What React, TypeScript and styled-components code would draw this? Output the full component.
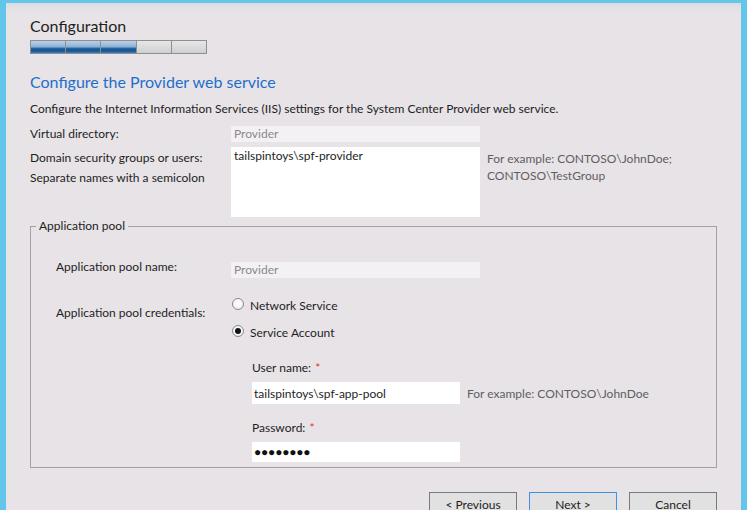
import React from "react";
import styled, { createGlobalStyle } from "styled-components";

const FONT = `"Segoe UI", Lato, "Liberation Sans", sans-serif`;

const GlobalStyle = createGlobalStyle`
  html, body { margin: 0; padding: 0; background: #61C6EA; }
  body { font-family: ${FONT}; font-size: 12px; color: #1e1e1e; }
  *, *::before, *::after { box-sizing: border-box; }
`;

const Frame = styled.div`
  width: 747px;
  height: 510px;
  background: #61C6EA;
  padding: 3px 6px 0 6px;
  overflow: hidden;
`;

const Panel = styled.div`
  height: 100%;
  background: linear-gradient(to bottom, #dedbde 0px, #e3e0e3 4px, #e7e3e7 9px, #e7e3e7 100%);
  padding: 0 24px 0 24px;
  display: flex;
  flex-direction: column;
  overflow: hidden;
  & > * {
    flex-shrink: 0;
  }
`;

const Title = styled.h1`
  margin: 13px 0 0 0;
  font-family: ${FONT};
  font-weight: 400;
  font-size: 16px;
  line-height: 20px;
  color: #1e1e1e;
`;

const Progress = styled.div`
  margin-top: 4px;
  width: 177px;
  height: 14px;
  border: 1px solid #8f8f8f;
  display: flex;
  gap: 1px;
  background: #8f8f8f;
`;

const Segment = styled.div<{ $done: boolean }>`
  flex: 1;
  background: ${(p) =>
    p.$done
      ? "linear-gradient(to bottom, #b9d0e6 0%, #97b8da 40%, #7fa7cf 52%, #2b66a4 58%, #16528f 80%, #3d7db8 100%)"
      : "linear-gradient(to bottom, #e6e6e6 0%, #dcdcdc 50%, #cfcfcf 100%)"};
`;

const Heading = styled.h2`
  margin: 18px 0 0 0;
  font-family: ${FONT};
  font-weight: 400;
  font-size: 16px;
  line-height: 20px;
  color: #1d6fcb;
`;

const Description = styled.p`
  margin: 9px 0 0 0;
  line-height: 16px;
`;

const FormRow = styled.div<{ $top: number; $labelWidth: number }>`
  margin-top: ${(p) => p.$top}px;
  display: grid;
  grid-template-columns: ${(p) => p.$labelWidth}px auto 1fr;
  align-items: start;
`;

const Label = styled.div<{ $shift?: number; $lh?: number }>`
  margin-top: ${(p) => p.$shift ?? 0}px;
  line-height: ${(p) => p.$lh ?? 16}px;
  color: #1e1e1e;
`;

const ReadOnlyInput = styled.input`
  width: 249px;
  height: 16px;
  border: none;
  outline: none;
  margin: 0;
  padding: 0 3px;
  background: #f3f1f3;
  color: #8a8a8a;
  font-family: ${FONT};
  font-size: 12px;
  line-height: 16px;
`;

const TextArea = styled.textarea`
  width: 249px;
  height: 70px;
  border: none;
  outline: none;
  margin: 0;
  padding: 1px 3px;
  background: #ffffff;
  color: #1e1e1e;
  resize: none;
  font-family: ${FONT};
  font-size: 12px;
  line-height: 16px;
  overflow: hidden;
`;

const Hint = styled.div<{ $top?: number }>`
  margin-left: 7px;
  padding-top: ${(p) => p.$top ?? 0}px;
  line-height: 17px;
  color: #5f5f5f;
`;

const GroupBox = styled.fieldset`
  margin: 1px 0 0 0;
  padding: 0 0 5px 0;
  border: 1px solid #a2a2a2;
  min-inline-size: 0;
`;

const Legend = styled.legend`
  margin-left: 5px;
  padding: 0 3px;
  line-height: 16px;
  color: #1e1e1e;
`;

const GroupBody = styled.div`
  padding-left: 25px;
`;

const RadioList = styled.div`
  display: flex;
  flex-direction: column;
  gap: 11px;
`;

const RadioOption = styled.label`
  display: flex;
  align-items: flex-start;
  gap: 6px;
  line-height: 16px;
  color: #1e1e1e;
`;

const RadioInput = styled.input`
  appearance: none;
  -webkit-appearance: none;
  margin: 0 0 0 1px;
  width: 12px;
  height: 12px;
  border-radius: 50%;
  border: 1px solid #8a8a8a;
  background: radial-gradient(circle at 50% 40%, #ffffff 0%, #f4f4f4 60%, #e2e2e2 100%);
  display: grid;
  place-items: center;
  &:checked::after {
    content: "";
    width: 6px;
    height: 6px;
    border-radius: 50%;
    background: #151515;
  }
`;

const SubForm = styled.div`
  margin: 19px 0 0 196px;
  display: flex;
  flex-direction: column;
`;

const FieldLabel = styled.div<{ $top: number }>`
  margin-top: ${(p) => p.$top}px;
  line-height: 16px;
  color: #1e1e1e;
`;

const Required = styled.span`
  color: #e5322d;
  margin-left: 4px;
`;

const FieldLine = styled.div`
  margin-top: 6px;
  display: flex;
  align-items: center;
`;

const TextInput = styled.input<{ $h: number }>`
  width: 208px;
  height: ${(p) => p.$h}px;
  border: none;
  outline: none;
  margin: 0;
  padding: 0 2px;
  background: #ffffff;
  color: #1e1e1e;
  font-family: ${FONT};
  font-size: 12px;
  line-height: 16px;
`;

const PasswordField = styled.div`
  width: 208px;
  height: 20px;
  background: #ffffff;
  padding: 0 0 0 2px;
  font-family: "Liberation Sans", "DejaVu Sans", sans-serif;
  font-size: 12px;
  line-height: 20px;
  letter-spacing: -0.2px;
  color: #111;
`;

const ButtonBar = styled.div`
  margin-top: 24px;
  display: flex;
  justify-content: flex-end;
  gap: 12px;
`;

const Button = styled.button<{ $primary?: boolean }>`
  width: 88px;
  height: 26px;
  margin: 0;
  padding: 0;
  border: 1px solid ${(p) => (p.$primary ? "#3c93e6" : "#7a7a7a")};
  background: #e1e1e1;
  font-family: ${FONT};
  font-size: 12px;
  line-height: 16px;
  color: #1e1e1e;
`;

export default function App() {
  return (
    <Frame>
      <GlobalStyle />
      <Panel>
        <Title>Configuration</Title>
        <Progress>
          {[true, true, true, false, false].map((d, i) => (
            <Segment key={i} $done={d} />
          ))}
        </Progress>
        <Heading>Configure the Provider web service</Heading>
        <Description>
          Configure the Internet Information Services (IIS) settings for the System Center Provider web service.
        </Description>

        <FormRow $top={9} $labelWidth={201}>
          <Label>Virtual directory:</Label>
          <ReadOnlyInput value="Provider" disabled readOnly />
        </FormRow>

        <FormRow $top={5} $labelWidth={201}>
          <Label $lh={20} $shift={1}>
            Domain security groups or users:
            <br />
            Separate names with a semicolon
          </Label>
          <TextArea value="tailspintoys\spf-provider" readOnly />
          <Hint $top={3}>
            For example: CONTOSO\JohnDoe;
            <br />
            CONTOSO\TestGroup
          </Hint>
        </FormRow>

        <GroupBox>
          <Legend>Application pool</Legend>
          <GroupBody>
            <FormRow $top={28} $labelWidth={175}>
              <Label $shift={-3}>Application pool name:</Label>
              <ReadOnlyInput value="Provider" disabled readOnly />
            </FormRow>

            <FormRow $top={20} $labelWidth={175}>
              <Label $shift={7}>Application pool credentials:</Label>
              <RadioList>
                <RadioOption>
                  <RadioInput type="radio" name="cred" readOnly />
                  Network Service
                </RadioOption>
                <RadioOption>
                  <RadioInput type="radio" name="cred" defaultChecked />
                  Service Account
                </RadioOption>
              </RadioList>
            </FormRow>

            <SubForm>
              <FieldLabel $top={0}>
                User name:<Required>*</Required>
              </FieldLabel>
              <FieldLine>
                <TextInput $h={22} value="tailspintoys\spf-app-pool" readOnly />
                <Hint>For example: CONTOSO\JohnDoe</Hint>
              </FieldLine>
              <FieldLabel $top={16}>
                Password:<Required>*</Required>
              </FieldLabel>
              <FieldLine>
                <PasswordField>●●●●●●●●</PasswordField>
              </FieldLine>
            </SubForm>
          </GroupBody>
        </GroupBox>

        <ButtonBar>
          <Button>&lt; Previous</Button>
          <Button $primary>Next &gt;</Button>
          <Button>Cancel</Button>
        </ButtonBar>
      </Panel>
    </Frame>
  );
}
